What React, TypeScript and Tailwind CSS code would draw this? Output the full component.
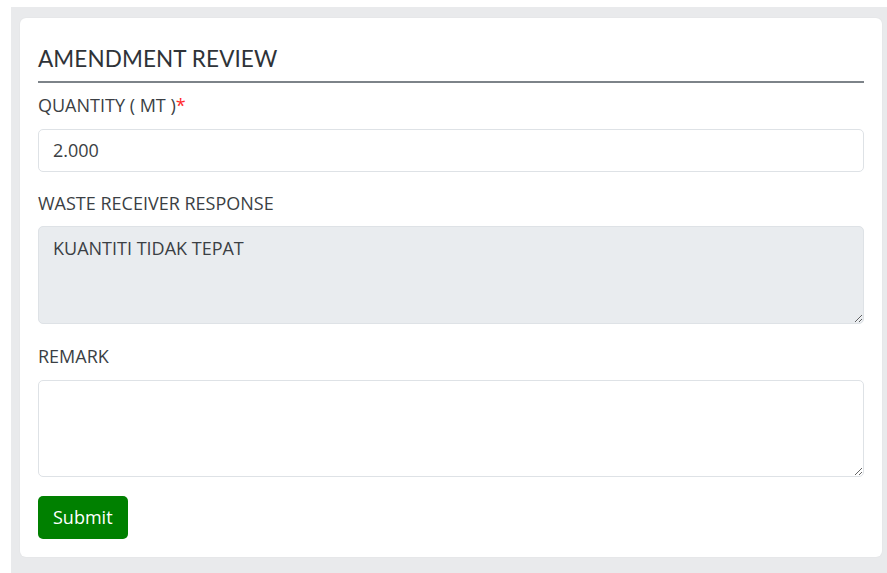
import React from 'react';

const labelCls = 'block text-[18px] leading-[24px] text-[#3b3f44] uppercase';
const boxCls =
  'w-full rounded-[5px] border border-[#dee2e6] px-[14px] text-[18px] text-[#3b3f44] outline-none';

export default function App() {
  return (
    <div className="min-h-[573px] bg-white pl-[11px] pt-[7px] font-['Open_Sans',sans-serif]">
      <div className="min-h-[566px] bg-[#e9eaec] pl-[9px] pr-[5px] pt-[11px] pb-[17px]">
        <div className="rounded-[6px] bg-white px-[18px] pt-[26px] pb-[18px] shadow-[0_0_2px_rgba(0,0,0,0.06)]">
          <h2 className="font-['Lato',sans-serif] text-[22.5px] leading-[30px] tracking-[0.1px] text-[#2f3338]">
            AMENDMENT REVIEW
          </h2>
          <hr className="mt-[7px] border-0 h-[1.5px] bg-[#7d8389]" />

          <form className="mt-[10px] flex flex-col">
            <label className={labelCls}>
              QUANTITY ( MT )<span className="text-[#ff2a2a]">*</span>
            </label>
            <input
              className={`${boxCls} mt-[12px] h-[43px]`}
              defaultValue="2.000"
              readOnly
            />

            <label className={`${labelCls} mt-[19px]`}>WASTE RECEIVER RESPONSE</label>
            <textarea
              className={`${boxCls} mt-[11px] h-[98px] bg-[#e9ecef] py-[8px] leading-[26px]`}
              defaultValue="KUANTITI TIDAK TEPAT"
              disabled
            />

            <label className={`${labelCls} mt-[20px]`}>REMARK</label>
            <textarea className={`${boxCls} mt-[12px] h-[97px] py-[8px]`} />

            <div className="mt-[19px]">
              <button
                type="button"
                className="h-[43px] rounded-[5px] bg-[#008000] px-[15px] text-[18px] text-white"
              >
                Submit
              </button>
            </div>
          </form>
        </div>
      </div>
    </div>
  );
}
